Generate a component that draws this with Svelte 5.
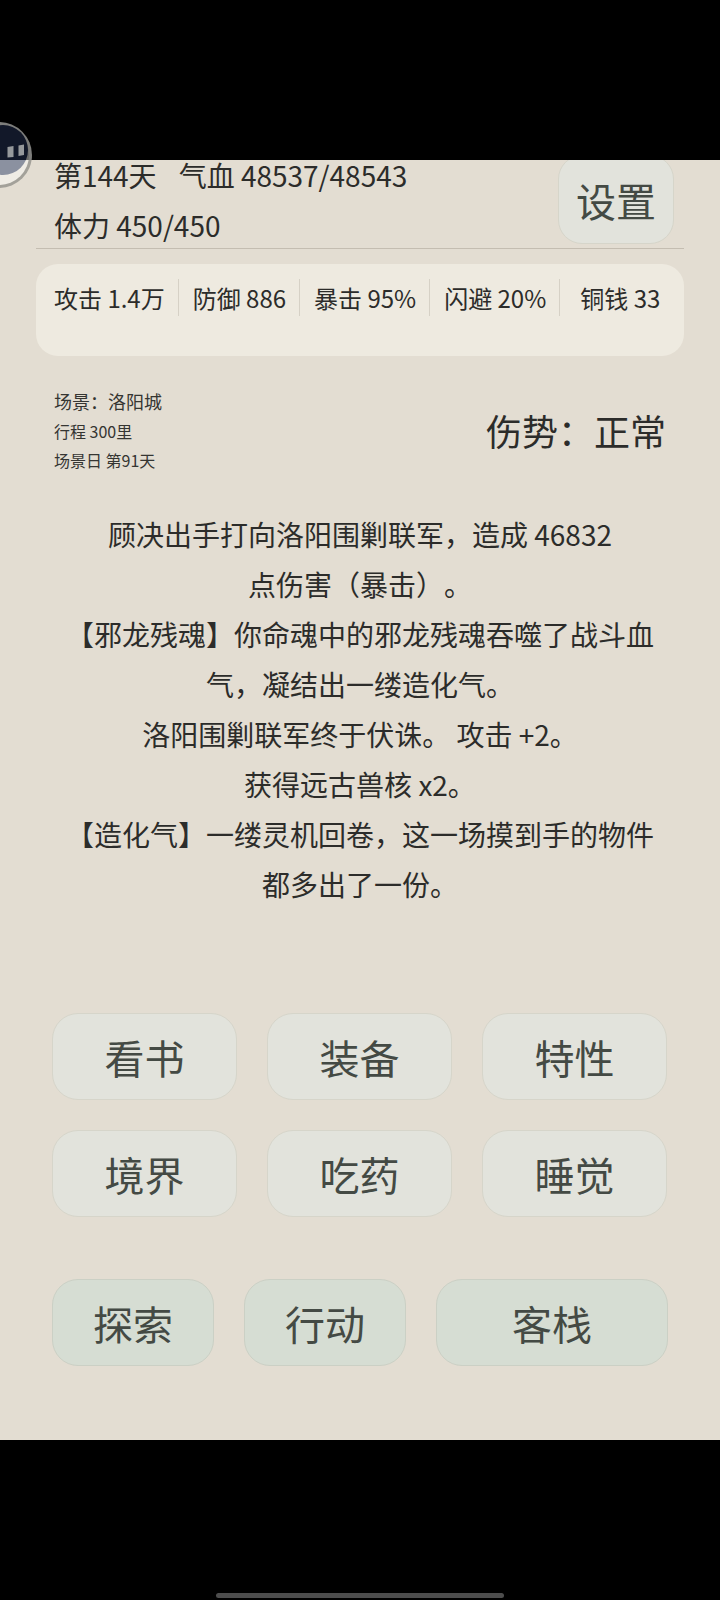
<script>
  const stats = ['攻击 1.4万', '防御 886', '暴击 95%', '闪避 20%', '铜钱 33'];
  const log = [
    '顾决出手打向洛阳围剿联军，造成 46832',
    '点伤害（暴击）。',
    '【邪龙残魂】你命魂中的邪龙残魂吞噬了战斗血',
    '气，凝结出一缕造化气。',
    '洛阳围剿联军终于伏诛。 攻击 +2。',
    '获得远古兽核 x2。',
    '【造化气】一缕灵机回卷，这一场摸到手的物件',
    '都多出了一份。'
  ];
  const gridButtons = ['看书', '装备', '特性', '境界', '吃药', '睡觉'];
  const actions = ['探索', '行动', '客栈'];
</script>

<div class="screen">
  <div class="topbar"></div>
  <main class="viewport">
    <div class="content">
      <header class="head">
        <div class="vitals">
          <div class="vital-row"><span>第144天</span><span>气血 48537/48543</span></div>
          <div>体力 450/450</div>
        </div>
        <button class="settings">设置</button>
      </header>
      <section class="stats">
        {#each stats as s}
          <div class="stat">{s}</div>
        {/each}
      </section>
      <section class="scene">
        <div class="scene-info">
          <div class="scene-name">场景：洛阳城</div>
          <div>行程 300里</div>
          <div>场景日 第91天</div>
        </div>
        <div class="injury">伤势：正常</div>
      </section>
      <section class="log">
        {#each log as line}
          <div>{line}</div>
        {/each}
      </section>
      <section class="grid">
        {#each gridButtons as b}
          <button class="btn">{b}</button>
        {/each}
      </section>
      <section class="actions">
        {#each actions as a}
          <button class="btn act">{a}</button>
        {/each}
      </section>
    </div>
  </main>
  <div class="navbar"><div class="home"></div></div>
  <svg class="float" viewBox="0 110 50 90" width="50" height="90" aria-hidden="true">
    <defs>
      <clipPath id="above"><rect x="0" y="110" width="50" height="50" /></clipPath>
      <clipPath id="below"><rect x="0" y="160" width="50" height="40" /></clipPath>
    </defs>
    <g clip-path="url(#above)">
      <circle cx="-1" cy="155" r="33" fill="#7d7d7b" />
      <circle cx="-1" cy="155" r="30" fill="#6c6c6a" />
      <circle cx="3" cy="150" r="25" fill="#121829" />
    </g>
    <g clip-path="url(#below)">
      <circle cx="-1" cy="155" r="33" fill="#a3a19a" />
      <circle cx="-1" cy="155" r="30" fill="#efece5" />
      <circle cx="3" cy="150" r="25" fill="#8b91a0" />
    </g>
    <polygon points="7.5,147 13.5,146 13.5,157 7.5,157.5" fill="#96999c" />
    <polygon points="18.5,145.5 24,144.5 24,155 18.5,156" fill="#96999c" />
  </svg>
</div>

<style>
  :global(body) {
    margin: 0;
    background: #000;
  }
  .screen {
    position: relative;
    width: 720px;
    height: 1600px;
    overflow: hidden;
    background: #000;
    font-family: "Noto Sans CJK SC", "Noto Sans", sans-serif;
    color: #2c2c2a;
    text-spacing-trim: space-all;
  }
  .topbar {
    height: 160px;
  }
  .viewport {
    height: 1280px;
    overflow: hidden;
    background: #e3ddd2;
  }
  .content {
    margin-top: -9px;
    display: flex;
    flex-direction: column;
    padding: 0 36px;
  }
  .head {
    display: flex;
    justify-content: space-between;
    align-items: flex-start;
    padding: 0 10px 0 18px;
    height: 97px;
    border-bottom: 1px solid #c4bdb1;
  }
  .vitals {
    font-size: 28px;
    line-height: 50px;
    margin-top: -1px;
  }
  .vital-row {
    display: flex;
    gap: 22px;
    white-space: nowrap;
  }
  .settings {
    width: 116px;
    height: 89px;
    margin-top: 4px;
    padding: 0;
    font: inherit;
    font-size: 40px;
    color: #444a44;
    background: #e2e3dc;
    border: 1px solid #d6d5ca;
    border-radius: 24px;
  }
  .stats {
    margin-top: 15px;
    height: 92px;
    box-sizing: border-box;
    padding: 15px 18px 0;
    display: flex;
    align-items: flex-start;
    background: #eeeae0;
    border-radius: 22px;
  }
  .stat {
    font-size: 24px;
    line-height: 37px;
    white-space: nowrap;
    padding: 0 13px 0 14px;
    border-left: 1px solid #d6d1c6;
  }
  .stat:first-child {
    padding-left: 0;
    border-left: 0;
  }
  .stat:last-child {
    padding-left: 20px;
    padding-right: 0;
  }
  .scene {
    display: flex;
    justify-content: space-between;
    align-items: center;
    margin-top: 32px;
    padding: 0 18px;
  }
  .scene-info {
    font-size: 16px;
    line-height: 29px;
    color: #353532;
  }
  .scene-name {
    font-size: 18px;
    margin-top: -1px;
    margin-bottom: 1px;
  }
  .injury {
    font-size: 36px;
    line-height: 50px;
    margin-top: -4px;
  }
  .log {
    margin-top: 34px;
    font-size: 28px;
    line-height: 50px;
    text-align: center;
    white-space: nowrap;
    height: 400px;
  }
  .grid {
    margin-top: 104px;
    padding: 0 16px;
    display: grid;
    grid-template-columns: repeat(3, 185px);
    column-gap: 30px;
    row-gap: 30px;
  }
  .btn {
    height: 87px;
    padding: 0;
    font: inherit;
    font-size: 40px;
    color: #444a44;
    background: #e2e3dc;
    border: 1px solid #d6d5ca;
    border-radius: 26px;
  }
  .actions {
    margin-top: 62px;
    padding: 0 16px;
    display: grid;
    grid-template-columns: 162px 162px 232px;
    column-gap: 30px;
  }
  .act {
    background: #d6ddd3;
    border-color: #cbd0c5;
  }
  .navbar {
    height: 160px;
    position: relative;
  }
  .home {
    position: absolute;
    left: 216px;
    top: 153px;
    width: 288px;
    height: 5px;
    border-radius: 3px;
    background: #4d4d4d;
  }
  .float {
    position: absolute;
    left: 0;
    top: 110px;
  }
</style>
